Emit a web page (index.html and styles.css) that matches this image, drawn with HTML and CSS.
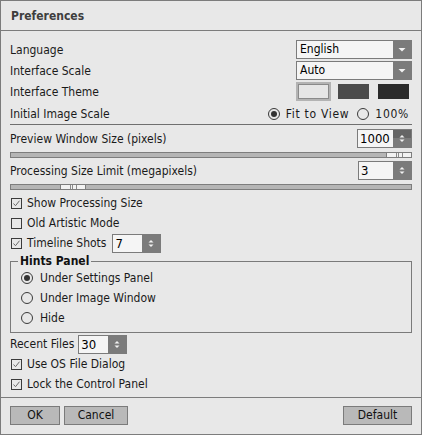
FILE: index.html
```html
<!DOCTYPE html>
<html>
<head>
<meta charset="utf-8">
<title>Preferences</title>
<link rel="stylesheet" href="styles.css">
</head>
<body>
<div class="dialog">
  <div class="titlebar">Preferences</div>
  <div class="content">
    <div class="row r19 mb2">
      <span class="lbl">Language</span>
      <div class="combo"><span class="val">English</span><span class="drop"><svg width="18" height="17" viewBox="0 0 18 17"><path d="M5.5 7h7l-3.5 3.5z" fill="#f2f2f2"/></svg></span></div>
    </div>
    <div class="row r19 mb2">
      <span class="lbl">Interface Scale</span>
      <div class="combo"><span class="val">Auto</span><span class="drop"><svg width="18" height="17" viewBox="0 0 18 17"><path d="M5.5 7h7l-3.5 3.5z" fill="#f2f2f2"/></svg></span></div>
    </div>
    <div class="row r19 mb2">
      <span class="lbl">Interface Theme</span>
      <div class="swatches">
        <span class="swatch light sel"></span>
        <span class="swatch mid"></span>
        <span class="swatch dark"></span>
      </div>
    </div>
    <div class="row r21">
      <span class="lbl">Initial Image Scale</span>
      <div class="radios">
        <span class="opt"><span class="radio on"></span>Fit to View</span>
        <span class="opt"><span class="radio"></span>100%</span>
      </div>
    </div>
    <div class="sep"></div>
    <div class="row r19 mt4">
      <span class="lbl">Preview Window Size (pixels)</span>
      <div class="spin w55"><span class="num">1000</span><span class="arr"><span class="half up hot"><svg width="18" height="8" viewBox="0 0 18 8"><path d="M6.5 7.5h5L9 5z" fill="#f2f2f2"/></svg></span><span class="half dn"><svg width="18" height="9" viewBox="0 0 18 9"><path d="M6.5 1.5h5L9 4z" fill="#f2f2f2"/></svg></span></span></div>
    </div>
    <div class="slider"><span class="thumb" style="left:375px"></span></div>
    <div class="row r19 mt3">
      <span class="lbl">Processing Size Limit (megapixels)</span>
      <div class="spin w54"><span class="num">3</span><span class="arr"><span class="half up"><svg width="18" height="8" viewBox="0 0 18 8"><path d="M6.5 7.5h5L9 5z" fill="#f2f2f2"/></svg></span><span class="half dn"><svg width="18" height="9" viewBox="0 0 18 9"><path d="M6.5 1.5h5L9 4z" fill="#f2f2f2"/></svg></span></span></div>
    </div>
    <div class="slider"><span class="thumb" style="left:49px"></span></div>
    <div class="checks">
      <div class="row r20"><span class="check on"><svg width="9" height="9" viewBox="0 0 9 9"><path d="M1.5 4.5l2 2.2 4-5" fill="none" stroke="#6a6a6a" stroke-width="1"/></svg></span>Show Processing Size</div>
      <div class="row r20"><span class="check"></span>Old Artistic Mode</div>
      <div class="row r20"><span class="check on"><svg width="9" height="9" viewBox="0 0 9 9"><path d="M1.5 4.5l2 2.2 4-5" fill="none" stroke="#6a6a6a" stroke-width="1"/></svg></span>Timeline Shots
        <div class="spin w49 ml6"><span class="num">7</span><span class="arr"><span class="half up"><svg width="18" height="8" viewBox="0 0 18 8"><path d="M6.5 7.5h5L9 5z" fill="#f2f2f2"/></svg></span><span class="half dn"><svg width="18" height="9" viewBox="0 0 18 9"><path d="M6.5 1.5h5L9 4z" fill="#f2f2f2"/></svg></span></span></div>
      </div>
    </div>
    <fieldset class="group">
      <legend>Hints Panel</legend>
      <div class="row r20"><span class="radio on"></span>Under Settings Panel</div>
      <div class="row r20"><span class="radio"></span>Under Image Window</div>
      <div class="row r20"><span class="radio"></span>Hide</div>
    </fieldset>
    <div class="row r20 mt1">Recent Files
      <div class="spin w49 ml4"><span class="num">30</span><span class="arr"><span class="half up"><svg width="18" height="8" viewBox="0 0 18 8"><path d="M6.5 7.5h5L9 5z" fill="#f2f2f2"/></svg></span><span class="half dn"><svg width="18" height="9" viewBox="0 0 18 9"><path d="M6.5 1.5h5L9 4z" fill="#f2f2f2"/></svg></span></span></div>
    </div>
    <div class="row r20"><span class="check on"><svg width="9" height="9" viewBox="0 0 9 9"><path d="M1.5 4.5l2 2.2 4-5" fill="none" stroke="#6a6a6a" stroke-width="1"/></svg></span>Use OS File Dialog</div>
    <div class="row r20"><span class="check on"><svg width="9" height="9" viewBox="0 0 9 9"><path d="M1.5 4.5l2 2.2 4-5" fill="none" stroke="#6a6a6a" stroke-width="1"/></svg></span>Lock the Control Panel</div>
  </div>
  <div class="footer">
    <button class="btn w50">OK</button>
    <button class="btn w64">Cancel</button>
    <button class="btn w69 right">Default</button>
  </div>
</div>
</body>
</html>
```

FILE: styles.css
```css
* { box-sizing: border-box; }
html, body { margin: 0; padding: 0; background: #e8e8e8; }
body {
  font-family: "DejaVu Sans Condensed", "DejaVu Sans", sans-serif;
  font-stretch: condensed;
  font-size: 12px;
  color: #1a1a1a;
}
.dialog {
  width: 422px;
  height: 435px;
  border: 1px solid #7c7c7c;
  background: #e8e8e8;
  display: flex;
  flex-direction: column;
}
.titlebar {
  flex: none;
  height: 30px;
  border-bottom: 1px solid #7c7c7c;
  padding-left: 10px;
  padding-top: 1px;
  display: flex;
  align-items: center;
  font-weight: bold;
  color: #3e3e3e;
}
.content {
  flex: none;
  padding: 9px 9px 3px 9px;
}
.row { display: flex; align-items: center; white-space: nowrap; }
.r19 { height: 19px; }
.r20 { height: 20px; }
.r21 { height: 21px; }
.mb2 { margin-bottom: 2px; }
.mt1 { margin-top: 1px; }
.mt3 { margin-top: 3px; }
.mt4 { margin-top: 4px; }
.ml4 { margin-left: 4px; }
.ml6 { margin-left: 6px; }
.lbl { flex: 1; }

.combo {
  width: 116px;
  height: 19px;
  border: 1px solid #7b7b7b;
  background: #f5f5f5;
  display: flex;
}
.combo .val { flex: 1; padding-left: 3px; line-height: 17px; color: #000; }
.combo .drop { width: 18px; background: #7b7b7b; display: flex; }

.swatches { display: flex; gap: 9px; margin-right: 3px; }
.swatch { width: 31px; height: 15px; display: block; }
.swatch.light { background: #e6e6e6; border: 1px solid #8a8a8a; }
.swatch.sel { box-shadow: 0 0 0 2px #b3b3b3; }
.swatch.mid { background: #4b4b4b; }
.swatch.dark { background: #2b2b2b; }

.radios { display: flex; gap: 8px; margin-right: 3px; letter-spacing: 0.7px; }
.opt { display: flex; align-items: center; }
.radio {
  width: 12px;
  height: 12px;
  border: 1px solid #3a3a3a;
  border-radius: 50%;
  display: inline-flex;
  align-items: center;
  justify-content: center;
  margin-right: 6px;
  flex: none;
}
.radio.on::after {
  content: "";
  width: 6px;
  height: 6px;
  border-radius: 50%;
  background: #333;
}

.sep { border-top: 1px solid #6f6f6f; height: 0; }

.spin {
  height: 19px;
  border: 1px solid #7b7b7b;
  background: #f5f5f5;
  display: flex;
}
.w55 { width: 55px; }
.w54 { width: 54px; }
.w49 { width: 49px; }
.spin .num { flex: 1; padding-left: 2px; line-height: 17px; font-size: 13px; color: #000; }
.spin .arr { width: 18px; background: #7b7b7b; display: flex; flex-direction: column; }
.spin .half { display: block; height: 8px; line-height: 0; }
.spin .half.dn { height: 9px; }
.spin .half.hot { background: #656565; }

.slider {
  position: relative;
  height: 6px;
  margin-top: 4px;
  border: 1px solid #7d7d7d;
  background: #b5b5b5;
}
.thumb {
  position: absolute;
  top: -1px;
  width: 26px;
  height: 6px;
  border: 1px solid #7d7d7d;
  background: #f2f2f2;
  display: flex;
  justify-content: center;
}
.thumb::after {
  content: "";
  width: 5px;
  height: 4px;
  border-left: 1px solid #8a8a8a;
  border-right: 1px solid #8a8a8a;
  background: linear-gradient(90deg, transparent 1px, #8a8a8a 1px, #8a8a8a 2px, transparent 2px);
}

.checks { margin-top: 3px; }
.check {
  width: 11px;
  height: 11px;
  border: 1px solid #3c3c3c;
  margin-right: 5px;
  margin-left: 1px;
  display: inline-flex;
  flex: none;
}

.group {
  margin: 1px 0 0 0;
  padding: 0 0 4px 10px;
  border: 1px solid #7a7a7a;
  min-width: 0;
}
.group legend {
  font-weight: bold;
  color: #111;
  padding: 0 2px;
  margin-left: -3px;
  line-height: 14px;
}
.group .radio { margin-right: 7px; }

.footer {
  flex: 1;
  border-top: 1px solid #7c7c7c;
  padding: 8px 9px 0 9px;
  display: flex;
  align-items: flex-start;
  gap: 4px;
}
.btn {
  height: 19px;
  border: 1px solid #7b7b7b;
  background: #b9b9b9;
  font: inherit;
  font-stretch: condensed;
  color: #111;
  padding: 0;
  line-height: 17px;
}
.w50 { width: 50px; }
.w64 { width: 64px; }
.w69 { width: 69px; }
.right { margin-left: auto; }
```
